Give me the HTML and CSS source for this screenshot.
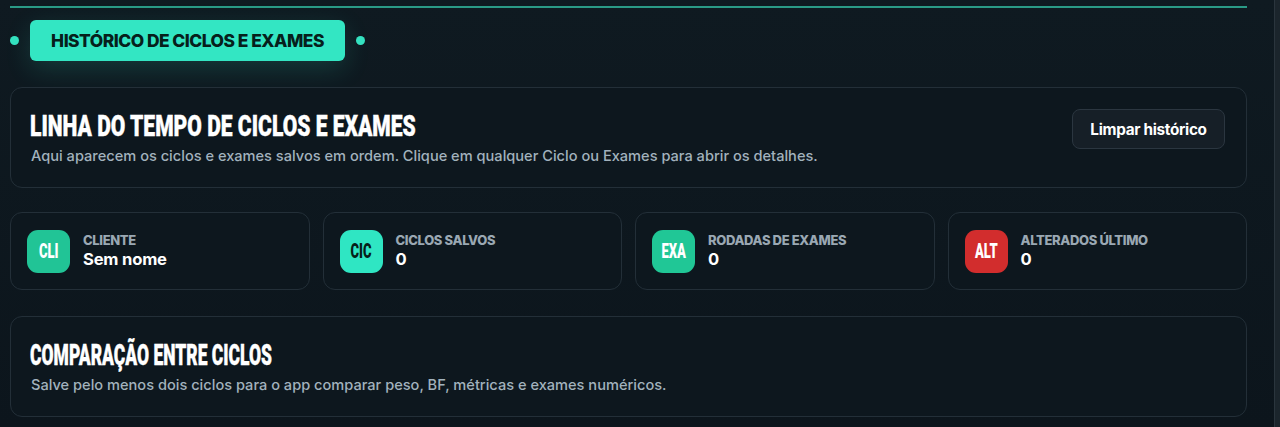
FILE: index.html
```html
<!DOCTYPE html>
<html lang="pt-BR">
<head>
<meta charset="utf-8">
<title>Histórico de ciclos e exames</title>
<link rel="stylesheet" href="styles.css">
</head>
<body>
<div class="page">
  <main class="content">
    <div class="topline"></div>
    <div class="tabrow">
      <span class="dot"></span>
      <div class="pill">HISTÓRICO DE CICLOS E EXAMES</div>
      <span class="dot"></span>
    </div>

    <section class="card card-head">
      <div class="card-text">
        <h2 class="title"><span class="cond cond-a">LINHA DO TEMPO DE CICLOS E EXAMES</span></h2>
        <p class="sub">Aqui aparecem os ciclos e exames salvos em ordem. Clique em qualquer Ciclo ou Exames para abrir os detalhes.</p>
      </div>
      <button class="btn">Limpar histórico</button>
    </section>

    <section class="stats">
      <div class="stat">
        <div class="badge b-cli"><span class="bcond">CLI</span></div>
        <div class="stat-text">
          <div class="label">CLIENTE</div>
          <div class="value">Sem nome</div>
        </div>
      </div>
      <div class="stat">
        <div class="badge b-cic"><span class="bcond">CIC</span></div>
        <div class="stat-text">
          <div class="label">CICLOS SALVOS</div>
          <div class="value">0</div>
        </div>
      </div>
      <div class="stat">
        <div class="badge b-exa"><span class="bcond">EXA</span></div>
        <div class="stat-text">
          <div class="label">RODADAS DE EXAMES</div>
          <div class="value">0</div>
        </div>
      </div>
      <div class="stat">
        <div class="badge b-alt"><span class="bcond">ALT</span></div>
        <div class="stat-text">
          <div class="label">ALTERADOS ÚLTIMO</div>
          <div class="value">0</div>
        </div>
      </div>
    </section>

    <section class="card card-cmp">
      <h2 class="title"><span class="cond cond-b">COMPARAÇÃO ENTRE CICLOS</span></h2>
      <p class="sub">Salve pelo menos dois ciclos para o app comparar peso, BF, métricas e exames numéricos.</p>
    </section>
  </main>
  <div class="rail"></div>
</div>
</body>
</html>
```

FILE: styles.css
```css
* { box-sizing: border-box; }
html, body { margin: 0; padding: 0; }
body {
  background: #0c151c;
  color: #ffffff;
  font-family: Inter, "Noto Sans", "Liberation Sans", sans-serif;
  height: 427px;
  overflow: hidden;
}
.page {
  display: flex;
  height: 427px;
  background: linear-gradient(180deg, #0f1a21 0%, #0c151c 100%);
}
.content {
  width: 1247px;
  padding-left: 10px;
  padding-top: 6px;
  display: flex;
  flex-direction: column;
}
.rail {
  flex: 1;
  border-right: 5px solid #1b252c;
  box-shadow: inset -1px 0 0 #2a353d;
}
.topline {
  height: 2px;
  background: #2a9a86;
}
.tabrow {
  display: flex;
  align-items: center;
  gap: 11px;
  margin-top: 12px;
}
.dot {
  width: 9px;
  height: 9px;
  border-radius: 50%;
  background: #34e2c0;
}
.pill {
  width: 315px;
  height: 41px;
  border-radius: 6px;
  background: #33e6c3;
  color: #06201b;
  font-weight: 800;
  font-size: 17.4px;
  letter-spacing: -0.5px;
  display: flex;
  align-items: center;
  justify-content: center;
  box-shadow: 0 8px 26px rgba(51, 230, 195, 0.16);
}
.card {
  background: #0d171e;
  border: 1px solid #232f38;
  border-radius: 12px;
}
.card-head {
  margin-top: 26px;
  height: 101px;
  padding: 20px 21px 0 20px;
  display: flex;
  justify-content: space-between;
  align-items: flex-start;
}
.title {
  margin: 0 0 0 -1px;
  font-family: Roboto, "Liberation Sans", sans-serif;
  font-weight: 900;
  font-size: 29px;
  line-height: 36px;
  color: #ffffff;
  white-space: nowrap;
  -webkit-text-stroke: 0.4px #ffffff;
}
.cond {
  display: inline-block;
  transform-origin: left center;
}
.cond-a { transform: scaleX(0.727); }
.cond-b { transform: scaleX(0.603); }
.sub {
  margin: 1px 0 0 0;
  font-size: 14.6px;
  font-weight: 500;
  color: #a2b2bd;
  line-height: 22px;
}
.btn {
  margin-top: 1px;
  width: 153px;
  height: 40px;
  background: #161f27;
  border: 1px solid #2b3640;
  border-radius: 8px;
  color: #ffffff;
  font-family: Inter, "Noto Sans", sans-serif;
  font-weight: 700;
  font-size: 15.3px;
  letter-spacing: -0.3px;
}
.stats {
  margin-top: 24px;
  display: grid;
  grid-template-columns: repeat(4, 1fr);
  gap: 13px;
}
.stat {
  height: 78px;
  background: #0d171e;
  border: 1px solid #232f38;
  border-radius: 12px;
  display: flex;
  align-items: center;
  padding: 0 16px;
  gap: 13px;
}
.badge {
  width: 43px;
  height: 43px;
  border-radius: 11px;
  display: flex;
  align-items: center;
  justify-content: center;
  font-family: Roboto, "Liberation Sans", sans-serif;
  font-weight: 900;
  font-size: 21px;
  color: #ffffff;
}
.bcond {
  display: inline-block;
  transform: scaleX(0.62);
}
.b-cli { background: #21c496; }
.b-cic { background: #2fe6c3; color: #062019; }
.b-exa { background: #20c796; }
.b-alt { background: #d22d2d; }
.stat-text { display: flex; flex-direction: column; }
.label {
  font-size: 13px;
  font-weight: 800;
  color: #9aa8b3;
  letter-spacing: -0.35px;
  line-height: 16px;
  margin-top: -1px;
}
.value {
  font-size: 16.6px;
  font-weight: 700;
  color: #ffffff;
  line-height: 22px;
  letter-spacing: -0.2px;
  margin-bottom: -1px;
}
.card-cmp {
  margin-top: 26px;
  height: 101px;
  padding: 20px 21px 0 20px;
}
```
